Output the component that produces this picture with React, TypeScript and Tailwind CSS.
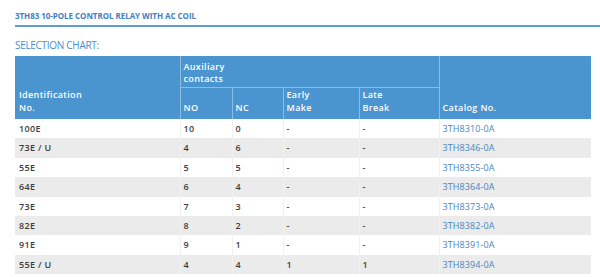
import React from 'react';

type Row = {
  id: string;
  no: string;
  nc: string;
  early: string;
  late: string;
  catalog: string;
};

const rows: Row[] = [
  { id: '100E', no: '10', nc: '0', early: '-', late: '-', catalog: '3TH8310-0A' },
  { id: '73E / U', no: '4', nc: '6', early: '-', late: '-', catalog: '3TH8346-0A' },
  { id: '55E', no: '5', nc: '5', early: '-', late: '-', catalog: '3TH8355-0A' },
  { id: '64E', no: '6', nc: '4', early: '-', late: '-', catalog: '3TH8364-0A' },
  { id: '73E', no: '7', nc: '3', early: '-', late: '-', catalog: '3TH8373-0A' },
  { id: '82E', no: '8', nc: '2', early: '-', late: '-', catalog: '3TH8382-0A' },
  { id: '91E', no: '9', nc: '1', early: '-', late: '-', catalog: '3TH8391-0A' },
  { id: '55E / U', no: '4', nc: '4', early: '1', late: '1', catalog: '3TH8394-0A' },
];

export default function App() {
  return (
    <div
      className="w-[600px] h-[277px] bg-white overflow-hidden"
      style={{ fontFamily: '"Open Sans", "Liberation Sans", sans-serif' }}
    >
      {/* Product heading */}
      <div className="pl-[15px] pt-[11px]">
        <h2 className="text-[8px] leading-[10px] font-bold tracking-[-0.05px] text-[#3f80bf] uppercase">
          3TH83 10-POLE CONTROL RELAY WITH AC COIL
        </h2>
      </div>
      <div className="ml-[15px] mt-[4px] h-[2px] bg-[#5d9dd2]" />

      <div className="pl-[15px] pr-[9px] pt-[12px]">
        <h3 className="text-[10px] leading-[12px] font-normal tracking-[-0.3px] text-[#4b8dca] uppercase">
          Selection Chart:
        </h3>

        {/* Selection table */}
        <table className="mt-[5px] w-[576px] border-collapse table-fixed text-[9px] font-semibold tracking-[0.35px]">
          <colgroup>
            <col className="w-[165px]" />
            <col className="w-[52px]" />
            <col className="w-[51px]" />
            <col className="w-[76px]" />
            <col className="w-[80px]" />
            <col className="w-[152px]" />
          </colgroup>
          <thead className="bg-[#4a94cf] text-white">
            <tr className="h-[31px]">
              <th
                rowSpan={2}
                className="align-bottom text-left font-semibold leading-[13px] px-[4px] pb-[5px] border-r border-[#8dbce2]"
              >
                Identification
                <br />
                No.
              </th>
              <th
                colSpan={4}
                className="align-top text-left font-semibold leading-[12px] px-[3px] pt-[5px] border-r border-b border-[#8dbce2]"
              >
                Auxiliary
                <br />
                contacts
              </th>
              <th
                rowSpan={2}
                className="align-bottom text-left font-semibold leading-[13px] px-[3px] pb-[5px]"
              >
                Catalog No.
              </th>
            </tr>
            <tr className="h-[32px]">
              <th className="align-bottom text-left font-semibold leading-[13px] px-[3px] pb-[5px] border-r border-[#8dbce2]">
                NO
              </th>
              <th className="align-bottom text-left font-semibold leading-[13px] px-[3px] pb-[5px] border-r border-[#8dbce2]">
                NC
              </th>
              <th className="align-bottom text-left font-semibold leading-[13px] px-[3px] pb-[5px] border-r border-[#8dbce2]">
                Early
                <br />
                Make
              </th>
              <th className="align-bottom text-left font-semibold leading-[13px] px-[3px] pb-[5px] border-r border-[#8dbce2]">
                Late
                <br />
                Break
              </th>
            </tr>
          </thead>
          <tbody className="text-[#3d3d3d]">
            {rows.map((r, i) => (
              <tr key={r.catalog} className={`h-[19.4px] ${i % 2 === 1 ? 'bg-[#ebebeb]' : 'bg-white'}`}>
                <td className="px-[4px] py-0 border-r border-[#f0f0f0]">{r.id}</td>
                <td className="px-[3px] py-0 border-r border-[#f0f0f0]">{r.no}</td>
                <td className="px-[3px] py-0 border-r border-[#f0f0f0]">{r.nc}</td>
                <td className="px-[3px] py-0 border-r border-[#f0f0f0]">{r.early}</td>
                <td className="px-[3px] py-0 border-r border-[#f0f0f0]">{r.late}</td>
                <td className="px-[3px] py-0 font-normal tracking-[0.1px] text-[#4a85c0]">{r.catalog}</td>
              </tr>
            ))}
          </tbody>
        </table>
      </div>
    </div>
  );
}
